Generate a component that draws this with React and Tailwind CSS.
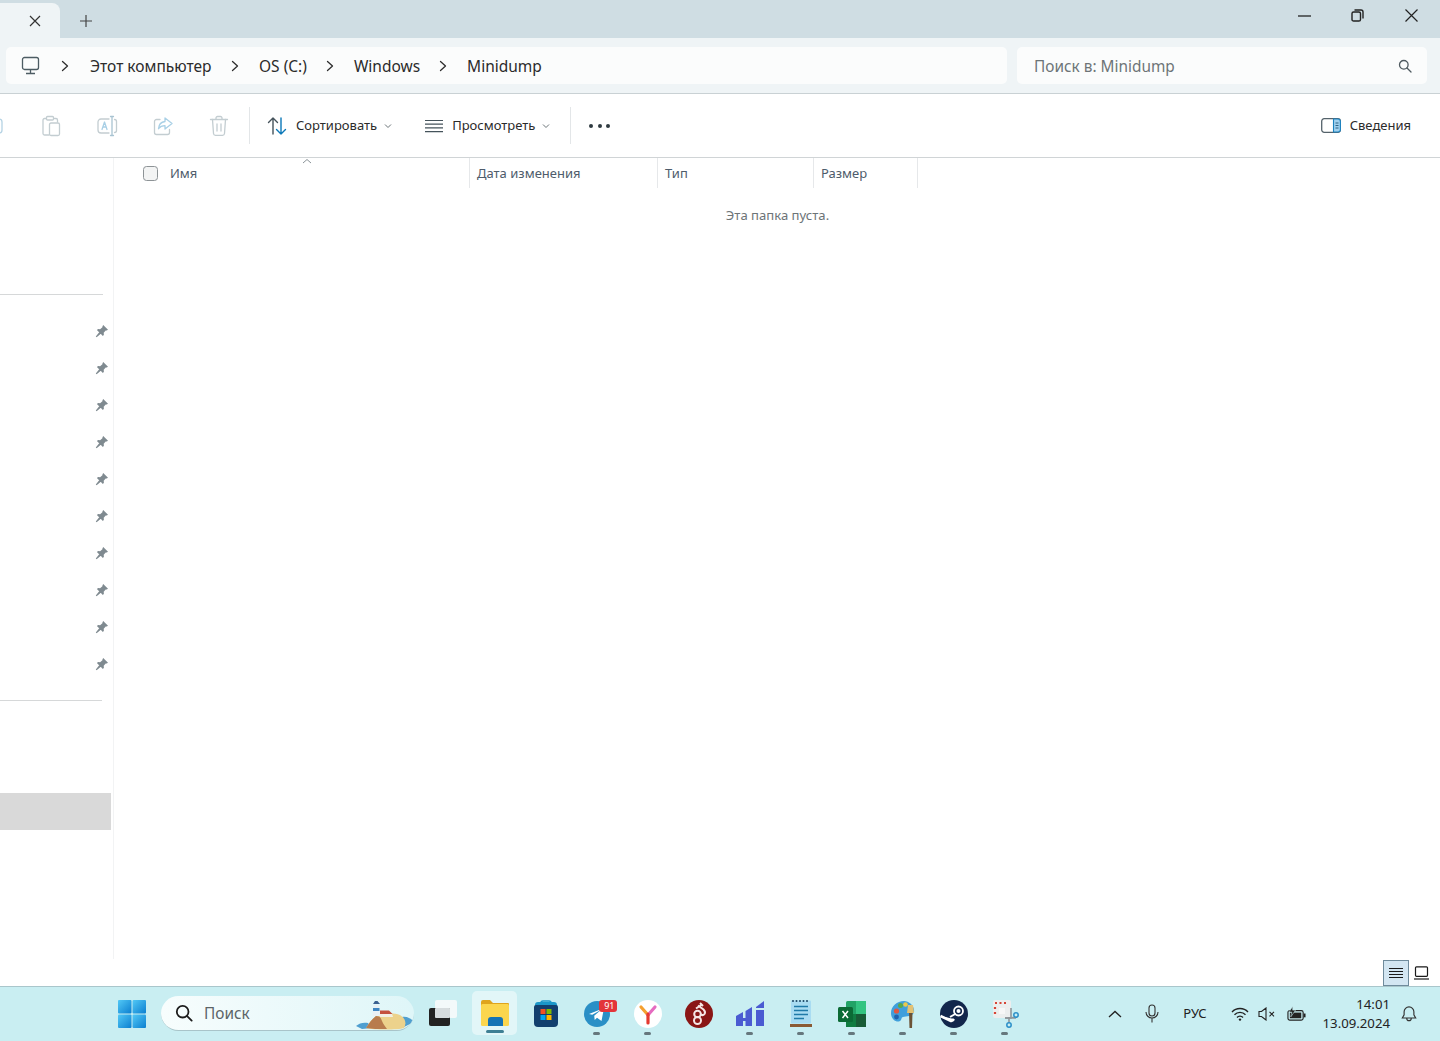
import React from "react";

const Chev = () => (
  <svg width="8" height="12" viewBox="0 0 8 12" fill="none" stroke="#2e2e2e" strokeWidth="1.3" strokeLinecap="round" strokeLinejoin="round"><path d="M1.5 1.500 6.500 6l-5 4.500" /></svg>
);
const Down = () => (
  <svg width="8" height="6" viewBox="0 0 8 6" fill="none" stroke="#6b7478" strokeWidth="1"><path d="M1 1.500 4 4.500l3-3" /></svg>
);
const Crumb = ({ children, cls }) => (
  <span className={"text-[15.5px] text-[#2b2b2b] leading-none mt-[2px] whitespace-nowrap " + cls}>{children}</span>
);
const Pin = () => (
  <svg width="14" height="14" viewBox="0 0 14 14" fill="#7f8a90"><path d="M8.200 1 13 5.800l-1.300.6-1 .1-2 2.300.2 2-1 1.200L1.900 6.100l1.200-1 2 .2 2.300-2 .1-1zM4.200 8.200l1.600 1.600L1.600 13.200.8 12.400z" /></svg>
);
const ToolIcon = ({ children }) => (
  <div className="w-[56px] flex justify-center shrink-0">
    <svg width="22" height="22" viewBox="0 0 22 22" fill="none" stroke="#c3cdd1" strokeWidth="1.300" strokeLinejoin="round" strokeLinecap="round">{children}</svg>
  </div>
);
const Dot = ({ active }) => (
  <div className={active ? "w-[18px] h-[3px] rounded-full bg-[#3d7f94]" : "w-[7px] h-[3px] rounded-full bg-[#66777d]"} />
);
const Cell = ({ children, dot = true }) => (
  <div className="w-[51px] shrink-0 flex flex-col items-center">
    <div className="h-[37px] flex items-center justify-center relative">{children}</div>
    {dot && <Dot />}
  </div>
);

export default function App() {
  return (
    <div className="w-[1440px] h-[1041px] overflow-hidden flex flex-col bg-white font-['Noto_Sans','Open_Sans',sans-serif]">
      {/* Title bar */}
      <div className="h-[38px] shrink-0 flex bg-[#cfdde3]">
        <div className="w-[60px] mt-[3px] h-[35px] bg-[#eff4f6] rounded-tr-[8px] flex items-center justify-end pr-[19px]">
          <svg width="12" height="12" viewBox="0 0 12 12" stroke="#333" strokeWidth="1.200"><path d="M1 1l10 10M11 1 1 11" /></svg>
        </div>
        <div className="ml-[20px] flex items-center mt-[3px]">
          <svg width="12" height="12" viewBox="0 0 12 12" stroke="#444" strokeWidth="1.200"><path d="M6 0v12M0 6h12" /></svg>
        </div>
        <div className="ml-auto flex items-center h-[31px]">
          <svg width="13" height="2" viewBox="0 0 13 2" className="mr-[40px]"><path d="M0 1h13" stroke="#222" strokeWidth="1.300" /></svg>
          <svg width="13" height="13" viewBox="0 0 13 13" fill="none" stroke="#222" strokeWidth="1.400" className="mr-[41px]"><rect x="1" y="3" width="8.500" height="9" rx="1.600" /><path d="M3.500 1h6.500A2 2 0 0 1 12 3v6.500" /></svg>
          <svg width="13" height="13" viewBox="0 0 13 13" stroke="#222" strokeWidth="1.200" className="mr-[22px]"><path d="M.5.5l12 12M12.500.5l-12 12" /></svg>
        </div>
      </div>

      {/* Address bar */}
      <div className="h-[56px] shrink-0 bg-[#eff4f6] border-b border-[#c9d1d4] flex items-start pt-[9px] pl-[6px] pr-[13px] gap-[10px]">
        <div className="w-[1001px] h-[37px] bg-[#fbfcfc] rounded-[5px] flex items-center">
          <svg width="20" height="20" viewBox="0 0 20 20" fill="none" stroke="#4d5c63" strokeWidth="1.300" className="ml-[15px] mr-[20px]"><rect x="1.500" y="1.500" width="16" height="12" rx="2" /><path d="M9.500 13.500V17M5 17.500h9" /></svg>
          <Chev />
          <Crumb cls="ml-[21px] mr-[19px] w-[122px]">Этот компьютер</Crumb>
          <Chev />
          <Crumb cls="ml-[20px] mr-[19px]">OS (C:)</Crumb>
          <Chev />
          <Crumb cls="ml-[20px] mr-[19px]">Windows</Crumb>
          <Chev />
          <Crumb cls="ml-[20px]">Minidump</Crumb>
        </div>
        <div className="w-[410px] h-[37px] bg-[#fbfcfc] rounded-[5px] flex items-center justify-between pl-[17px] pr-[15px]">
          <span className="text-[15.4px] text-[#6d7477] leading-none mt-[2px]">Поиск в: Minidump</span>
          <svg width="14" height="14" viewBox="0 0 14 14" fill="none" stroke="#4f5a60" strokeWidth="1.300"><circle cx="5.800" cy="5.800" r="4.300" /><path d="M9 9l4 4" strokeLinecap="round" /></svg>
        </div>
      </div>

      {/* Toolbar */}
      <div className="h-[64px] shrink-0 border-b border-[#d0d4d6] flex items-center bg-white">
        <div className="-ml-[33px] flex items-center">
          <ToolIcon><rect x="4" y="4" width="14" height="14" rx="3" stroke="#b5d3e4" /></ToolIcon>
          <ToolIcon>
            <path d="M6 3.500H4.500A1.500 1.500 0 0 0 3 5v13.500A1.500 1.500 0 0 0 4.500 20H9" /><path d="M14.500 3.500H16A1.500 1.500 0 0 1 17.500 5v2" /><rect x="6.500" y="1.500" width="7" height="3.500" rx="1" />
            <rect x="9.500" y="8" width="10" height="12.500" rx="1.500" />
          </ToolIcon>
          <ToolIcon>
            <path d="M13 4H5a3 3 0 0 0-3 3v8a3 3 0 0 0 3 3h8" /><path d="M6 14.500 8.500 7l2.500 7.500M7 12h3" stroke="#a9d0e6" />
            <path d="M14.500 1.500h3M14.500 20.500h3M16 1.500v19" stroke="#a9c4d2" /><path d="M18.500 4.500c1.500 0 2 1 2 2v9c0 1-.5 2-2 2" />
          </ToolIcon>
          <ToolIcon>
            <path d="M8 4.500H4.500A2 2 0 0 0 2.500 6.500v11a2 2 0 0 0 2 2h11a2 2 0 0 0 2-2v-3" />
            <path d="M13 3l7 5.500-7 5.500v-3.300c-3 0-5 1-6.500 3 .3-4 2.700-6.800 6.500-7.200z" stroke="#a9d0e6" />
          </ToolIcon>
          <ToolIcon>
            <path d="M2.500 4.500h17M8 4.500V3a1.500 1.500 0 0 1 1.500-1.500h3A1.500 1.500 0 0 1 14 3v1.500" /><path d="M4.500 4.500l1 14a2 2 0 0 0 2 1.800h7a2 2 0 0 0 2-1.800l1-14" /><path d="M9 9v7M13 9v7" />
          </ToolIcon>
        </div>
        <div className="w-px h-[37px] bg-[#e3e6e8] ml-[2px]" />
        <svg width="20" height="20" viewBox="0 0 20 20" fill="none" strokeWidth="1.400" strokeLinecap="round" strokeLinejoin="round" className="ml-[17px]">
          <path d="M6 18V2M1.500 6.500 6 2l4.500 4.500" stroke="#45535b" /><path d="M14 2v16M9.500 13.500 14 18l4.500-4.500" stroke="#0a78b8" />
        </svg>
        <span className="ml-[9px] text-[13px] text-[#2b2b2b] whitespace-nowrap">Сортировать</span>
        <span className="ml-[7px]"><Down /></span>
        <svg width="20" height="14" viewBox="0 0 20 14" stroke="#45535b" strokeWidth="1.200" className="ml-[32px]"><path d="M1 1.500h18M1 5.200h18M1 8.900h18M1 12.600h18" /></svg>
        <span className="ml-[8px] text-[13px] text-[#2b2b2b] whitespace-nowrap">Просмотреть</span>
        <span className="ml-[7px]"><Down /></span>
        <div className="w-px h-[37px] bg-[#e3e6e8] ml-[20px]" />
        <div className="ml-[18px] flex gap-[4.500px]">
          <div className="w-[4px] h-[4px] rounded-full bg-[#2f3a40]" />
          <div className="w-[4px] h-[4px] rounded-full bg-[#2f3a40]" />
          <div className="w-[4px] h-[4px] rounded-full bg-[#2f3a40]" />
        </div>
        <svg width="20" height="15" viewBox="0 0 20 15" fill="none" className="ml-auto"><rect x=".7" y=".7" width="18.600" height="13.600" rx="2.500" stroke="#55636b" strokeWidth="1.300" /><path d="M12.500 1H17a2.400 2.400 0 0 1 2.400 2.400v8.200A2.400 2.400 0 0 1 17 14h-4.500z" fill="#9fd0ee" stroke="#1b82c0" strokeWidth="1.100" /><path d="M14.500 5h3M14.500 7.500h3M14.500 10h3" stroke="#20577a" strokeWidth=".9" /></svg>
        <span className="ml-[9px] mr-[29px] text-[13px] text-[#2b2b2b] whitespace-nowrap">Сведения</span>
      </div>

      {/* Main */}
      <div className="h-[801px] shrink-0 flex">
        <div className="w-[114px] shrink-0 border-r border-[#f2f3f4] flex flex-col">
          <div className="h-[137px] shrink-0 border-b border-[#d6d8d9] mr-[10px]" />
          <div className="pt-[29px] flex flex-col gap-[23px] items-end pr-[4px]">
            {[0, 1, 2, 3, 4, 5, 6, 7, 8, 9].map((i) => (
              <Pin key={i} />
            ))}
          </div>
          <div className="h-px mt-[29px] bg-[#d6d8d9] mr-[11px] shrink-0" />
          <div className="h-[37px] mt-[92px] bg-[#d9d9d9] mr-[2px] shrink-0" />
        </div>
        <div className="flex-1 flex flex-col relative">
          <svg width="10" height="6" viewBox="0 0 10 6" fill="none" stroke="#8a9398" strokeWidth="1" className="absolute left-[188px] top-0"><path d="M1 5 5 1.500 9 5" /></svg>
          <div className="h-[30px] flex text-[13px] text-[#4e5c6b]">
            <div className="w-[356px] border-r border-[#e6e8ea] flex items-center pl-[29px]">
              <div className="w-[15px] h-[15px] rounded-[3.500px] border border-[#8d9396] bg-[#f3f4f4]" />
              <span className="ml-[12px] mt-[2px]">Имя</span>
            </div>
            <div className="w-[188px] border-r border-[#e6e8ea] flex items-center pl-[7px] whitespace-nowrap"><span className="mt-[2px]">Дата изменения</span></div>
            <div className="w-[156px] border-r border-[#e6e8ea] flex items-center pl-[7px]"><span className="mt-[2px]">Тип</span></div>
            <div className="w-[104px] border-r border-[#e6e8ea] flex items-center pl-[7px]"><span className="mt-[2px]">Размер</span></div>
          </div>
          <div className="w-[1326px] text-center pt-[18px] text-[13.100px] text-[#6d7477] leading-[18px] pl-[1px]">Эта папка пуста.</div>
        </div>
      </div>

      {/* Status bar */}
      <div className="h-[27px] shrink-0 flex items-center justify-end bg-white pr-[8px]">
        <div className="w-[26px] h-[26px] bg-[#d3e6f2] border border-[#6f8b9c] flex items-center justify-center">
          <svg width="14" height="12" viewBox="0 0 14 12" stroke="#1a1a1a" strokeWidth="1"><path d="M0 1.500h14M0 4.500h14M0 7.500h14M0 10.500h14" /></svg>
        </div>
        <div className="w-[21px] flex justify-center ml-[2px]">
          <svg width="15" height="14" viewBox="0 0 15 14" fill="none" stroke="#1a1a1a" strokeWidth="1.200"><rect x="1.500" y=".8" width="12" height="9.500" rx="1" /><path d="M0 13h15" /></svg>
        </div>
      </div>

      {/* Taskbar */}
      <div className="h-[55px] shrink-0 bg-[#c9eef2] border-t border-[#a9c6cb] flex items-start">
        <svg width="28" height="28" viewBox="0 0 28 28" className="ml-[118px] mt-[13px] shrink-0">
          <defs>
            <linearGradient id="w1" x1="0" y1="0" x2="1" y2="1"><stop offset="0" stopColor="#52c8f6" /><stop offset="1" stopColor="#0b7fd0" /></linearGradient>
          </defs>
          <rect x="0" y="0" width="13.500" height="13.500" rx="1" fill="url(#w1)" />
          <rect x="14.500" y="0" width="13.500" height="13.500" rx="1" fill="url(#w1)" />
          <rect x="0" y="14.500" width="13.500" height="13.500" rx="1" fill="url(#w1)" />
          <rect x="14.500" y="14.500" width="13.500" height="13.500" rx="1" fill="url(#w1)" />
        </svg>
        <div className="ml-[15px] mt-[9px] w-[253px] h-[35px] rounded-full bg-gradient-to-r from-[#f7fdfd] to-[#dff6f8] border-b border-[#a8c4c9] flex items-center relative overflow-hidden shrink-0">
          <svg width="18" height="18" viewBox="0 0 20 20" fill="none" stroke="#1c1c1c" strokeWidth="2" className="ml-[14px]"><circle cx="8.500" cy="8.500" r="6.500" /><path d="M13.500 13.500l5 5" strokeLinecap="round" /></svg>
          <span className="ml-[11px] mt-[2px] text-[15.400px] text-[#5c6467] leading-none">Поиск</span>
          <svg width="58" height="31" viewBox="0 0 58 31" className="absolute right-0 top-[4px]">
            <path d="M0 26c3-3 8-4 12-3l4 5-10 1z" fill="#4f9fd0" />
            <path d="M46 17c4-1 9 1 12 5l-10 5z" fill="#4f9fd0" />
            <path d="M10 28c3-5 6-9 10-12 8-3 18-3 24-1 5 3 7 8 4 13-6 2-30 2-38 0z" fill="#ecd28c" />
            <path d="M10 28c3-5 6-9 10-12 4 0 5 2 6 5 1 3 3 5 5 8-8 0-16 0-21-1z" fill="#b87c4d" />
            <path d="M17.500 5h5.500l1 11h-7.500z" fill="#e9f0f3" />
            <path d="M19 1h2.500l2.500 3h-7z" fill="#3c6190" />
            <rect x="17" y="8" width="6.500" height="3" fill="#3f86c2" />
            <path d="M24 14h12l1 3H24z" fill="#f2efe4" />
            <path d="M24 10.500h9l3.500 3.500H24z" fill="#c4513f" />
          </svg>
        </div>

        {/* Task view */}
        <div className="ml-[15px] mt-[13px] relative w-[28px] h-[26px] shrink-0">
          <div className="absolute right-0 top-0 w-[22px] h-[18px] rounded-[2px] bg-[#f3f9fa]" />
          <div className="absolute left-0 bottom-0 w-[21px] h-[18px] rounded-[2px] bg-[#222]" />
          <div className="absolute left-[6px] top-[8px] w-[15px] h-[10px] rounded-[1px] bg-[#d6dcde]" />
        </div>

        {/* Explorer */}
        <div className="ml-[15px] mt-[4px] w-[45px] h-[44px] rounded-[5px] bg-[#e2f6f8] flex flex-col items-center shrink-0">
          <svg width="28" height="26" viewBox="0 0 28 26" className="mt-[9px]">
            <path d="M0 2a2 2 0 0 1 2-2h7l3 3h15a1 1 0 0 1 1 1v3H0z" fill="#dfa41d" />
            <rect x="0" y="4" width="28" height="22" rx="1.500" fill="#fbd64e" />
            <path d="M7 26v-6a3 3 0 0 1 3-3h9a3 3 0 0 1 3 3v6z" fill="#1473b5" />
          </svg>
          <div className="mt-[4px]"><Dot active /></div>
        </div>

        <div className="flex mt-[8px] ml-[3px]">
          <Cell dot={false}>
            <svg width="26" height="28" viewBox="0 0 26 28">
              <path d="M5 2h16a3 3 0 0 1 3 3v1H2V5a3 3 0 0 1 3-3z" fill="#1b97c9" />
              <path d="M8 5V3a2 2 0 0 1 2-2h6a2 2 0 0 1 2 2v2" fill="none" stroke="#1b97c9" strokeWidth="1.500" />
              <path d="M1 7a2 2 0 0 1 2-2h20a2 2 0 0 1 2 2v16a4 4 0 0 1-4 4H5a4 4 0 0 1-4-4z" fill="#123f6e" />
              <rect x="7.500" y="9" width="5" height="5" fill="#f25022" /><rect x="13.500" y="9" width="5" height="5" fill="#7fba00" />
              <rect x="7.500" y="15" width="5" height="5" fill="#00a4ef" /><rect x="13.500" y="15" width="5" height="5" fill="#ffb900" />
            </svg>
          </Cell>
          <Cell>
            <svg width="26" height="26" viewBox="0 0 26 26">
              <circle cx="13" cy="13" r="13" fill="#2a8fc6" />
              <path d="M5 13 20 7l-2.500 13-4.500-3.300-2.300 2.300-.5-4.200 7-6-9 5z" fill="#fff" />
            </svg>
            <div className="absolute left-[15px] top-[5px] w-[18px] h-[12px] rounded-[3px] bg-[#e3343a] text-white text-[9px] leading-[12px] text-right pr-[2px]">91</div>
          </Cell>
          <Cell>
            <svg width="28" height="28" viewBox="0 0 28 28" fill="none">
              <circle cx="14" cy="14" r="14" fill="#fff" />
              <path d="M14 15 7 7" stroke="#f5a030" strokeWidth="3.200" strokeLinecap="round" />
              <path d="M14 15l7-8" stroke="#e56bc0" strokeWidth="3.200" strokeLinecap="round" />
              <path d="M14 14v9" stroke="#e5392f" strokeWidth="3.200" strokeLinecap="round" />
            </svg>
          </Cell>
          <Cell dot={false}>
            <svg width="28" height="28" viewBox="0 0 28 28" fill="none" stroke="#f6e6e6" strokeWidth="2">
              <circle cx="14" cy="14" r="14" fill="#8a1616" stroke="none" />
              <circle cx="12.500" cy="14" r="3.300" />
              <circle cx="12.500" cy="20.500" r="3.500" />
              <path d="M15.500 14.500c4 2 6-2 3-5l-5.500-4M11 8.500 17 4.500M15 3l3 3" />
            </svg>
          </Cell>
          <Cell>
            <svg width="28" height="25" viewBox="0 0 28 25" fill="#4a5bd2">
              <path d="M0 15l7-4v14H0z" />
              <rect x="7" y="17" width="3" height="3" />
              <path d="M9.500 10l6.500-4v19H9.500z" />
              <path d="M20 6l8-6v7h-8z" />
              <rect x="20" y="9" width="8" height="16" />
            </svg>
          </Cell>
          <Cell>
            <svg width="22" height="29" viewBox="0 0 22 29" fill="none">
              <rect x="1" y="1.500" width="20" height="23" rx="1" fill="#a9dcf2" />
              <path d="M3 1v2M6.500 1v2M10 1v2M13.500 1v2M17 1v2" stroke="#27526e" strokeWidth="1.600" />
              <path d="M4 7.500h14M4 11.500h14M4 15.500h14M4 19.500h10" stroke="#1f7aa8" strokeWidth="1.400" />
              <rect x="0" y="25" width="22" height="3" fill="#8a5a34" />
            </svg>
          </Cell>
          <Cell>
            <svg width="28" height="26" viewBox="0 0 28 26">
              <rect x="8" y="0" width="20" height="26" rx="1.500" fill="#21a366" />
              <rect x="18" y="0" width="10" height="13" fill="#33c481" />
              <rect x="8" y="13" width="10" height="13" fill="#107c41" />
              <rect x="18" y="13" width="10" height="13" fill="#185c37" />
              <rect x="0" y="6" width="15" height="15" rx="1.500" fill="#0b6a35" />
              <path d="M4.500 10l5.500 7M10 10l-5.500 7" stroke="#fff" strokeWidth="1.500" />
            </svg>
          </Cell>
          <Cell>
            <svg width="26" height="28" viewBox="0 0 26 28">
              <path d="M14 1C7 1 1 6 1 13c0 6 5 10 9 8 2-1 1-4 3-4 3-1 10 0 11-5 1-6-5-11-10-11z" fill="#3f9fdc" />
              <circle cx="6.500" cy="11" r="2.600" fill="#e0573f" /><circle cx="10.500" cy="5.500" r="2.500" fill="#5aa84b" /><circle cx="15.500" cy="4.500" r="2.300" fill="#ecc94b" />
              <circle cx="6.500" cy="17" r="2.400" fill="#1f62ad" />
              <path d="M19 12h3.500l-.5 16h-2.500z" fill="#6b5236" /><path d="M18 5h5l1 8h-7z" fill="#e3c275" />
            </svg>
          </Cell>
          <Cell>
            <svg width="28" height="28" viewBox="0 0 28 28" fill="none">
              <circle cx="14" cy="14" r="14" fill="#12264c" />
              <circle cx="18.500" cy="11" r="4.500" stroke="#fff" strokeWidth="1.800" />
              <circle cx="18.500" cy="11" r="2" fill="#fff" />
              <path d="M.5 16 10 20.500c2 1 3 0 4-1.500" fill="#fff" stroke="#fff" strokeWidth="2.500" />
              <path d="M10 17l6-3.500" stroke="#fff" strokeWidth="2" />
            </svg>
          </Cell>
          <Cell>
            <svg width="28" height="28" viewBox="0 0 28 28" fill="none">
              <rect x="2" y="0" width="18" height="18" rx="2" fill="#eceeee" />
              <path d="M4 3h2M8.500 3h2M13 3h2M4 7v2M4 12v2" stroke="#d64536" strokeWidth="2.200" />
              <path d="M8 8h6v6H8z" fill="#f7f7f7" />
              <path d="M20 8v10h-6" stroke="#8f9599" strokeWidth="1.600" />
              <path d="M14 18h11l-4-.5M18 17v6" stroke="#8f9599" strokeWidth="1.600" />
              <circle cx="25" cy="15" r="2.200" stroke="#2b8fc9" strokeWidth="1.500" />
              <circle cx="18" cy="25" r="2.200" stroke="#2b8fc9" strokeWidth="1.500" />
            </svg>
          </Cell>
        </div>

        {/* Tray */}
        <div className="ml-auto h-full flex items-center pr-[23px]">
          <svg width="14" height="8" viewBox="0 0 14 8" fill="none" stroke="#222" strokeWidth="1.300"><path d="M1 7l6-5.500L13 7" /></svg>
          <svg width="14" height="19" viewBox="0 0 14 19" fill="none" stroke="#333" strokeWidth="1.100" className="ml-[23px] -mt-[2px]"><rect x="4" y="1" width="6" height="11" rx="3" /><path d="M1 8a6 6 0 0 0 12 0M7 14v4.500" /></svg>
          <span className="ml-[19px] text-[13px] text-[#222] w-[34px] text-center">РУС</span>
          <svg width="18" height="14" viewBox="0 0 18 14" fill="none" stroke="#222" strokeWidth="1.400" className="ml-[19px]"><path d="M1 5a11 11 0 0 1 16 0M3.500 7.800a7.500 7.500 0 0 1 11 0M6 10.500a4 4 0 0 1 6 0" /><circle cx="9" cy="12.600" r="1.200" fill="#222" stroke="none" /></svg>
          <svg width="18" height="14" viewBox="0 0 18 14" fill="none" stroke="#222" strokeWidth="1.100" className="ml-[9px]"><path d="M1 4.500h2.500L8 1v12L3.500 9.500H1z" /><path d="M11.500 4.800l4.500 4.500M16 4.800l-4.500 4.500" /></svg>
          <svg width="19" height="16" viewBox="0 0 20 16" className="ml-[11px]"><rect x="1" y="4.500" width="16" height="10" rx="2" fill="none" stroke="#222" strokeWidth="1.200" /><rect x="3" y="6.500" width="12" height="6" fill="#222" /><rect x="17.500" y="7.500" width="2" height="4" fill="#222" /><path d="M6 0 2 6h3l-1 5 5-7H6z" fill="#222" stroke="#c9eef2" strokeWidth=".6" /></svg>
          <div className="ml-[4px] w-[80px] flex flex-col items-end text-[13.200px] leading-[19px] text-[#222] whitespace-nowrap -mt-[1px]">
            <span>14:01</span>
            <span>13.09.2024</span>
          </div>
          <svg width="16" height="18" viewBox="0 0 18 19" fill="none" stroke="#333" strokeWidth="1.300" className="ml-[11px]"><path d="M9 1.500a5.500 5.500 0 0 0-5.500 5.500v3.500L1.500 14h15l-2-3.500V7A5.500 5.500 0 0 0 9 1.500zM6.500 14.500a2.500 2.500 0 0 0 5 0" /></svg>
        </div>
      </div>
    </div>
  );
}
